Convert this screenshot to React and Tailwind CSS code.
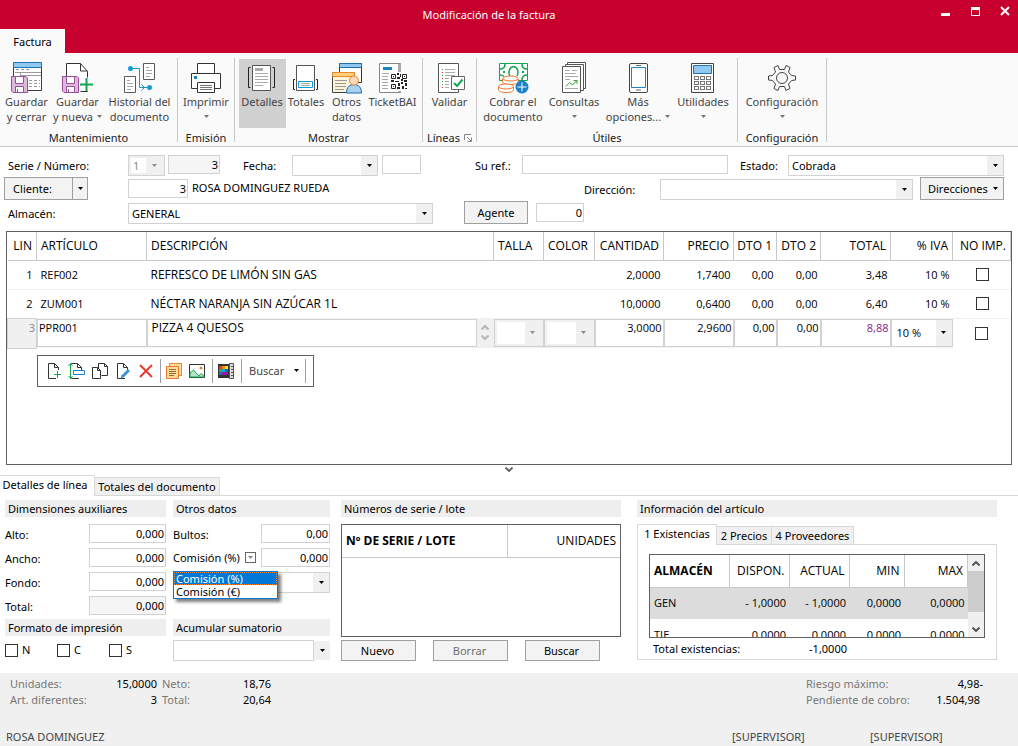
import { useState } from "react";

const lines = [
  { id: 1, code: "REF002", name: "REFRESCO DE LIMÓN SIN GAS", qty: "2,0000", price: "1,7400", d1: "0,00", d2: "0,00", total: "3,48" },
  { id: 2, code: "ZUM001", name: "NÉCTAR NARANJA SIN AZÚCAR 1L", qty: "10,0000", price: "0,6400", d1: "0,00", d2: "0,00", total: "6,40" },
];

const columns = [
  { label: "LIN", width: "w-[29px]", align: "text-right pr-1" },
  { label: "ARTÍCULO", width: "w-[110px]", align: "text-left pl-1" },
  { label: "DESCRIPCIÓN", width: "", align: "text-left pl-1" },
  { label: "TALLA", width: "w-[50px]", align: "text-left pl-1" },
  { label: "COLOR", width: "w-[51px]", align: "text-left pl-1" },
  { label: "CANTIDAD", width: "w-[69px]", align: "text-right pr-1" },
  { label: "PRECIO", width: "w-[70px]", align: "text-right pr-1" },
  { label: "DTO 1", width: "w-[43px]", align: "text-right pr-1" },
  { label: "DTO 2", width: "w-[44px]", align: "text-right pr-1" },
  { label: "TOTAL", width: "w-[70px]", align: "text-right pr-1" },
  { label: "% IVA", width: "w-[62px]", align: "text-right pr-1" },
  { label: "NO IMP.", width: "w-[58px]", align: "text-right pr-1" },
];

const stock = [
  { code: "GEN", values: ["- 1,0000", "- 1,0000", "0,0000", "0,0000"], selected: true },
  { code: "TIE", values: ["0,0000", "0,0000", "0,0000", "0,0000"], selected: false },
];

function Caret({ className = "text-black" }) {
  return (
    <svg className={`w-[5px] h-[3px] shrink-0 ${className}`} viewBox="0 0 5 3" fill="currentColor" aria-hidden="true">
      <path d="M0 0h5L2.500 3z" />
    </svg>
  );
}

function Chevron({ up = false }) {
  return (
    <svg viewBox="0 0 8 5" className="block h-[5px] w-2" fill="none" stroke="currentColor" strokeWidth="2" aria-hidden="true">
      <path d={up ? "M.5 4.500L4 1l3.500 3.500" : "M.5.5L4 4 7.500.5"} />
    </svg>
  );
}

function Field({ id, label, value = "", className = "", disabled = false }) {
  return (
    <input
      id={id}
      aria-label={label}
      defaultValue={value}
      disabled={disabled}
      className={`h-[19px] min-w-0 border border-[#d2d2d2] px-px pb-px text-right leading-4 outline-none ${disabled ? "bg-[#f5f5f5]" : "bg-white"} ${className}`}
    />
  );
}

function Combo({ id, label, value = "", height = "h-[21px]", className = "", disabled = false }) {
  return (
    <div className={`flex min-w-0 border border-[#d2d2d2] leading-4 ${height} ${disabled ? "bg-[#f0f0f0] p-0.5 text-[#8a8a8a]" : "bg-white"} ${className}`}>
      <select
        id={id}
        aria-label={label}
        disabled={disabled}
        className={`min-w-0 flex-1 appearance-none bg-white outline-none ${disabled ? "pl-0.5" : "pl-[3px]"}`}
      >
        <option>{value}</option>
      </select>
      <span className="pointer-events-none flex w-4 items-center justify-center bg-[#f0f0f0]">
        <Caret className={disabled ? "text-[#8a8a8a]" : "text-black"} />
      </span>
    </div>
  );
}

function Check({ label, children }) {
  return (
    <label className="flex items-center gap-1">
      <input
        type="checkbox"
        aria-label={label}
        className="size-[13px] appearance-none border border-[#333] bg-white align-middle checked:bg-[#0078d7]"
      />
      {children}
    </label>
  );
}

function PushButton({ children, disabled = false, className = "" }) {
  return (
    <button
      disabled={disabled}
      className={`border border-[#a0a0a0] bg-[#f3f3f3] text-center disabled:text-[#6d6d6d] ${className}`}
    >
      {children}
    </button>
  );
}

function SectionTitle({ children }) {
  return <h2 className="h-[17px] truncate bg-[#eeeeee] pl-[3px] leading-[17px]">{children}</h2>;
}

/* ---------- ribbon icons ---------- */

function Floppy({ x = 0, y = 0 }) {
  return (
    <g transform={`translate(${x} ${y})`}>
      <path d="M.5.5H15l1.500 1.500V16.500H2L.5 15z" fill="#dcb8dc" stroke="#9b4f9b" />
      <path d="M4.500 1v6.500h8V1" fill="#fff" stroke="#9b4f9b" />
      <path d="M4.500 16v-5.500h8V16" fill="#fff" stroke="#9b4f9b" />
      <path d="M6.500 13v3" stroke="#9b4f9b" />
    </g>
  );
}

function IconSaveClose() {
  return (
    <svg viewBox="0 0 32 32" className="size-8" fill="none" aria-hidden="true">
      <path d="M2.500 5.500h28v23h-28z" fill="#fff" stroke="#3b3b3b" />
      <path d="M2.500.5h28v5h-28z" fill="#92c8f0" stroke="#1a75bb" />
      <path d="M5 7.500h3m2 0h3m2 0h3M4 10.500h26M9.500 11v3M18 18.500h3m2 0h3m2 0h1M18 21.500h3m2 0h3m2 0h1M18 24.500h3m2 0h3m2 0h1M10 13.500h20" stroke="#9a9a9a" />
      <Floppy x={0} y={14} />
    </svg>
  );
}

function IconSaveNew() {
  return (
    <svg viewBox="0 0 32 32" className="size-8" fill="none" aria-hidden="true">
      <path d="M4.500 1.500h14l7 8v20h-21z" fill="#fff" stroke="#333" />
      <path d="M18.500 1.500v7.500h7" stroke="#333" />
      <path d="M17 31V17h15" stroke="#fafafa" strokeWidth="3" />
      <Floppy x={0} y={14} />
      <path d="M24.500 16v13M18 22.500h13" stroke="#fff" strokeWidth="4" />
      <path d="M24.500 16v13M18 22.500h13" stroke="#15a550" strokeWidth="2" />
    </svg>
  );
}

function IconHistory() {
  return (
    <svg viewBox="0 0 32 32" className="size-8" fill="none" aria-hidden="true">
      <path d="M19.500 1.500h11v16h-11zM.5 14.500h11v16H.5z" fill="#fff" stroke="#5a5a5a" />
      <path d="M22 5.500h3M22 8.500h6M22 11.500h6M22 14.500h4M3 18.500h3M3 21.500h6M3 24.500h6M3 27.500h4" stroke="#a5a5a5" />
      <path d="M7 6.500h8.500v19h10M17.500 22.500l3 3-3 3" stroke="#139bd9" />
      <circle cx="6.500" cy="6.500" r="2.500" fill="#139bd9" />
      <circle cx="25.500" cy="25.500" r="2.500" fill="#139bd9" />
    </svg>
  );
}

function IconPrint() {
  return (
    <svg viewBox="0 0 32 32" className="size-8" fill="none" aria-hidden="true">
      <path d="M7.500 11V1.500h17V11M7 26.500H1.500v-15h29v15H25" fill="#fff" stroke="#333" />
      <path d="M7.500 20.500h17v10h-17z" fill="#fff" stroke="#333" />
      <path d="M4 14h3v3H4z" fill="#1a82c8" />
      <path d="M10 23.500h12M10 25.500h12M10 27.500h12" stroke="#777" />
    </svg>
  );
}

function IconDetails() {
  return (
    <svg viewBox="0 0 32 32" className="size-8" fill="none" aria-hidden="true">
      <path d="M6.500 3.500h18v25h-18z" fill="#fff" stroke="#555" />
      <path d="M9 6h8v3H9z" fill="#aaa" />
      <path d="M9 11.500h13M9 14.500h13M9 17.500h13M9 20.500h13M9 23.500h8" stroke="#aaa" />
      <path d="M4.500 5.500h-2v20h2M26.500 5.500h2v20h-2" stroke="#222" />
    </svg>
  );
}

function IconTotals() {
  return (
    <svg viewBox="0 0 32 32" className="size-8" fill="none" aria-hidden="true">
      <path d="M6.500 3.500h18v25h-18z" fill="#fff" stroke="#555" />
      <path d="M8.500 19.500h14v6h-14z" fill="#fff" stroke="#139bd9" />
      <path d="M11 21.500h9M11 23.500h9" stroke="#aaa" />
      <path d="M5 17.500H3.500v10H5M26 17.500h1.500v10H26" stroke="#222" />
    </svg>
  );
}

function IconOther() {
  return (
    <svg viewBox="0 0 32 32" className="size-8" fill="none" aria-hidden="true">
      <path d="M8.500 1.500h22v19h-22z" fill="#fff" stroke="#333" />
      <path d="M8.500 1.500h22v4h-22z" fill="#92c8f0" stroke="#1a6fb0" />
      <path d="M1.500 10.500h22v20h-22z" fill="#fdf3d8" stroke="#444" />
      <path d="M1.500 10.500h22v4h-22z" fill="#ffd27a" stroke="#e8862c" />
      <path d="M4 18.500h12M4 21.500h11M4 24.500h11M4 27.500h9" stroke="#999" />
      <path d="M15.500 31c0-6 3-8.500 7.500-8.500s7.500 2.500 7.500 8.500z" fill="#a9d0ef" stroke="#1a6fb0" />
      <circle cx="23" cy="18.500" r="4.500" fill="#fcd9b8" stroke="#e8862c" />
    </svg>
  );
}

function IconTicket() {
  return (
    <svg viewBox="0 0 32 32" className="size-8" fill="none" aria-hidden="true">
      <path d="M2.500 1.500h21v29h-21z" fill="#fff" stroke="#888" />
      <path d="M21 2h3v28h-3z" fill="#aaa" />
      <path d="M6 5h9v3H6z" fill="#1a82c8" />
      <path d="M5 11.500h12M5 14.500h6M5 17.500h6M5 20.500h6M5 23.500h6M5 26.500h6" stroke="#aaa" />
      <path d="M12 10h19v19H12z" fill="#fff" />
      <path d="M14.500 12.500h4v4h-4zM25.500 12.500h4v4h-4zM14.500 22.500h4v4h-4z" stroke="#222" />
      <path
        d="M16 14h1v1h-1zM27 14h1v1h-1zM16 24h1v1h-1zM20 11h2v2h-2zM23 12h1v3h-1zM20 15h3v2h-3zM14 18h3v2h-3zM18 19h4v1h-4zM21 21h2v3h-2zM24 17h2v2h-2zM27 18h3v2h-3zM24 20h2v2h-2zM28 21h2v3h-2zM25 24h2v3h-2zM20 25h3v2h-3zM28 26h2v1h-2z"
        fill="#222"
      />
    </svg>
  );
}

function IconValidate() {
  return (
    <svg viewBox="0 0 32 32" className="size-8" fill="none" aria-hidden="true">
      <path d="M4.500 1.500h20v29h-20z" fill="#fff" stroke="#555" />
      <path d="M11 7.500h10M11 10.500h10M11 13.500h10M11 16.500h4M11 19.500h4M11 22.500h4M11 25.500h4" stroke="#aaa" />
      <path d="M8 7h1v1H8zM8 13h1v1H8zM8 19h1v1H8zM8 22h1v1H8z" fill="#22a34a" />
      <path d="M8 10h1v1H8zM8 16h1v1H8zM8 25h1v1H8z" fill="#e0302a" />
      <path d="M17.500 14.500h13v13h-13z" fill="#fff" stroke="#666" />
      <path d="M20 21l3 3 5.500-6.500" stroke="#15a550" strokeWidth="2" />
    </svg>
  );
}

function IconCollect() {
  return (
    <svg viewBox="0 0 32 32" className="size-8" fill="none" aria-hidden="true">
      <path d="M2.500 1.500h28v17h-28z" fill="#fff" stroke="#15a550" />
      <path d="M3 7c3 0 5-1 5-5M30 7c-3 0-5-1-5-5M30 13c-3 0-5 1-5 5M3 13c2 0 3 .5 4 1.500" stroke="#15a550" strokeWidth="1.500" />
      <path d="M13 14c-2-3-1-9 3.500-9.500 4.500.5 5.500 6 3.500 9.500" stroke="#15a550" strokeWidth="1.500" />
      <path d="M6 9h2v2H6zM25 9h2v2h-2z" fill="#15a550" />
      <path d="M5.500 16.500v3c0 2 3 3 7.500 3s8-1 8-3v-3" fill="#fff" stroke="#e8762c" />
      <ellipse cx="13.500" cy="16.500" rx="7.500" ry="2.500" fill="#fff" stroke="#e8762c" />
      <path d="M1.500 24.500v3c0 2 3 3 7.500 3s7.500-1 7.500-3v-3" fill="#fff" stroke="#e8762c" />
      <ellipse cx="9" cy="24.500" rx="7.500" ry="2.500" fill="#fff" stroke="#e8762c" />
      <circle cx="25" cy="25" r="6.500" fill="#1a82c8" />
      <path d="M25 20.500v9M20.500 25h9" stroke="#fff" />
    </svg>
  );
}

function IconQueries() {
  return (
    <svg viewBox="0 0 32 32" className="size-8" fill="none" aria-hidden="true">
      <path d="M9.500.5h18v26h-18z" fill="#fff" stroke="#555" />
      <path d="M7.500 2.500h18v26h-18z" fill="#fff" stroke="#555" />
      <path d="M4.500 4.500h18v26h-18z" fill="#fff" stroke="#555" />
      <path d="M7 8.500h5m2 0h5M7 11.500h11M7 14.500h13M7 17.500h5M7 26.500h13" stroke="#aaa" />
      <path d="M8 24.500l3.500-4 3 2.500 4.500-4.500M15.500 18.500H19V22" stroke="#35a635" />
    </svg>
  );
}

function IconPhone() {
  return (
    <svg viewBox="0 0 32 32" className="size-8" fill="none" aria-hidden="true">
      <rect x="7.500" y="1.500" width="18" height="29" rx="1.500" fill="#fff" stroke="#444" />
      <path d="M9.500 5.500h14v20h-14z" fill="#fff" stroke="#1a82c8" />
      <path d="M14 3.500h5M14 28h5" stroke="#666" />
    </svg>
  );
}

function IconCalculator() {
  const keys = [14, 19, 24].flatMap((y) => [5, 11, 17].map((x) => [x, y]));
  return (
    <svg viewBox="0 0 32 32" className="size-8" fill="none" aria-hidden="true">
      <path d="M4.500 1.500h22v29h-22z" fill="#fff" stroke="#444" />
      <path d="M6.500 3.500h18v8h-18z" fill="#92c8f0" stroke="#1a75bb" />
      {keys.map(([x, y]) => (
        <rect key={`${x}-${y}`} x={x + 2.5} y={y + 0.5} width="4" height="3" stroke="#777" />
      ))}
    </svg>
  );
}

function IconGear() {
  return (
    <svg viewBox="0 0 32 32" className="size-8" fill="none" stroke="#444" aria-hidden="true">
      <circle cx="16" cy="16" r="5.500" />
      <path
        strokeLinejoin="round"
        d="M13.500 7.500l-1.500-4-4 2 1.500 4.500-3 3.500-4 .5v4l4 .5 3 3.500-1.500 4.500 4 2 1.500-4h5l1.500 4 4-2-1.500-4.500 3-3.500 4-.5v-4l-4-.5-3-3.500 1.500-4.500-4-2-1.500 4z"
      />
    </svg>
  );
}

/* ---------- ribbon ---------- */

const ribbon = [
  {
    title: "Mantenimiento",
    width: "w-[178px]",
    items: [
      { icon: IconSaveClose, text: ["Guardar", "y cerrar"], width: "w-[52px]" },
      { icon: IconSaveNew, text: ["Guardar", "y nueva"], width: "w-[50px]", caret: "inline" },
      { icon: IconHistory, text: ["Historial del", "documento"], width: "w-[74px]" },
    ],
  },
  {
    title: "Emisión",
    width: "w-[57px]",
    items: [{ icon: IconPrint, text: ["Imprimir"], width: "w-[56px]", caret: "below" }],
  },
  {
    title: "Mostrar",
    width: "w-[188px]",
    items: [
      { icon: IconDetails, text: ["Detalles"], width: "w-[47px]", active: true },
      { icon: IconTotals, text: ["Totales"], width: "w-[41px]" },
      { icon: IconOther, text: ["Otros", "datos"], width: "w-[40px]" },
      { icon: IconTicket, text: ["TicketBAI"], width: "w-[52px]" },
    ],
  },
  {
    title: "Líneas",
    width: "w-[54px]",
    launcher: true,
    items: [{ icon: IconValidate, text: ["Validar"], width: "w-[53px]" }],
  },
  {
    title: "Útiles",
    width: "w-[261px]",
    items: [
      { icon: IconCollect, text: ["Cobrar el", "documento"], width: "w-[64px]" },
      { icon: IconQueries, text: ["Consultas"], width: "w-[58px]", caret: "below" },
      { icon: IconPhone, text: ["Más", "opciones..."], width: "w-[70px]", caret: "inline" },
      { icon: IconCalculator, text: ["Utilidades"], width: "w-[60px]", caret: "below" },
    ],
  },
  {
    title: "Configuración",
    width: "w-[89px]",
    items: [{ icon: IconGear, text: ["Configuración"], width: "w-[88px]", caret: "below" }],
  },
];

function RibbonItem({ item }) {
  const Icon = item.icon;
  return (
    <button
      className={`flex h-[69px] shrink-0 flex-col items-center pt-[3px] leading-[15px] whitespace-nowrap text-[#444] ${item.width} ${item.active ? "bg-[#d0d0d0]" : ""}`}
    >
      <Icon />
      <span>{item.text[0]}</span>
      {item.text[1] && (
        <span className="flex items-center gap-1">
          {item.text[1]}
          {item.caret === "inline" && <Caret className="text-[#777]" />}
        </span>
      )}
      {item.caret === "below" && (
        <span className="flex h-[15px] items-center">
          <Caret className="text-[#777]" />
        </span>
      )}
    </button>
  );
}

function Ribbon() {
  return (
    <div className="flex h-[94px] border-b border-[#c8c8c8] bg-[#fafafa] pt-[5px] pb-1">
      {ribbon.map((group) => (
        <section
          key={group.title}
          className={`flex shrink-0 flex-col justify-between border-r border-[#c8c8c8] pt-px ${group.width}`}
        >
          <div className="flex justify-center">
            {group.items.map((item) => (
              <RibbonItem key={item.text[0]} item={item} />
            ))}
          </div>
          <h2 className="flex h-2 items-center justify-center gap-1 leading-4 text-[#222]">
            {group.title}
            {group.launcher && (
              <button aria-label="Opciones de líneas">
                <svg viewBox="0 0 8 8" className="size-2" fill="none" stroke="#888" aria-hidden="true">
                  <path d="M.5 6V.5H7M3 3l4 4M7.500 3.500v4h-4" />
                </svg>
              </button>
            )}
          </h2>
        </section>
      ))}
    </div>
  );
}

/* ---------- line toolbar ---------- */

function Sheet() {
  return <path d="M10 15.500H2.500V.5h6l4 4V8M8.500.5v4h4" fill="none" stroke="#333" />;
}

function ToolIcon({ label, children }) {
  return (
    <button aria-label={label} className="flex h-6 w-[23px] items-center justify-center">
      <svg viewBox="0 0 16 16" className="size-4 overflow-visible" fill="none" aria-hidden="true">
        {children}
      </svg>
    </button>
  );
}

function LineToolbar() {
  return (
    <div className="mt-[6px] ml-[30px] flex h-8 w-[277px] items-center border border-[#5f5f5f] bg-white pl-1">
      <ToolIcon label="Nueva línea">
        <Sheet />
        <path d="M11.500 7v8M7.500 11.500h8" stroke="#fff" strokeWidth="3" />
        <path d="M11.500 8v7M8 11.500h7" stroke="#15a550" />
      </ToolIcon>
      <ToolIcon label="Insertar línea">
        <Sheet />
        <path d="M2.500 1v14" stroke="#fff" strokeWidth="3" />
        <path d="M4.500 7.500h11v4h-11z" fill="#fff" stroke="#1a82c8" />
        <path d="M1.500 1v14M-.5 3l2-2.500 2 2.500M-.5 13l2 2.500 2-2.500" stroke="#15a550" />
      </ToolIcon>
      <ToolIcon label="Duplicar línea">
        <path d="M6.500 5V.5h6l3 3v9h-6M12.500.5v3h3" stroke="#333" />
        <path d="M.5 4.500h5l3 3v8h-8zM5.500 4.500v3h3" fill="#fff" stroke="#333" />
      </ToolIcon>
      <ToolIcon label="Modificar línea">
        <Sheet />
        <path d="M7 14l7-7" stroke="#3d93d5" strokeWidth="3" />
        <path d="M5.500 15.500l1-2.500 1.500 1.500z" fill="#3d93d5" />
      </ToolIcon>
      <ToolIcon label="Eliminar línea">
        <path d="M2 2l12 12M14 2L2 14" stroke="#ec3b32" strokeWidth="2" />
      </ToolIcon>
      <span className="mr-px ml-[3px] h-6 w-px bg-[#a0a0a0]" />
      <ToolIcon label="Notas">
        <path d="M3.500.5h12v12h-12z" fill="#ffe0a0" stroke="#e8862c" />
        <path d="M.5 3.500h12v12H.5z" fill="#ffdb94" stroke="#e8762c" />
        <path d="M3 6.500h7M3 8.500h7M3 10.500h7M3 12.500h5" stroke="#8a6d3b" />
      </ToolIcon>
      <ToolIcon label="Imagen">
        <path d="M.5 1.500h15v13H.5z" fill="#fff" stroke="#333" />
        <path d="M1 10l3.500-3 5.500 6 2-2.500 3 2.500v1H1z" fill="#b9e3c6" stroke="#15a550" />
        <circle cx="12" cy="5" r="1.500" fill="#ee7b30" />
      </ToolIcon>
      <span className="mr-px ml-1 h-6 w-px bg-[#a0a0a0]" />
      <ToolIcon label="Tallas y colores">
        <path d="M0 1h12v14H0z" fill="#333" />
        <path d="M1 3h3v3H1z" fill="#e33" />
        <path d="M4 3h3v3H4z" fill="#f80" />
        <path d="M7 3h3v3H7z" fill="#fe0" />
        <path d="M1 6h3v3H1z" fill="#3a3" />
        <path d="M4 6h3v3H4z" fill="#0ad" />
        <path d="M7 6h3v3H7z" fill="#06c" />
        <path d="M1 9h3v3H1z" fill="#26c" />
        <path d="M4 9h3v3H4z" fill="#82a" />
        <path d="M7 9h3v3H7z" fill="#a1a" />
        <path d="M11.500.5h4v15h-4z" fill="#ddd" stroke="#555" />
        <path d="M13 3.500h2M13 6.500h2M13 9.500h2M13 12.500h2" stroke="#555" />
      </ToolIcon>
      <span className="ml-1 h-6 w-px bg-[#a0a0a0]" />
      <button className="flex h-6 w-[63px] items-center justify-between pr-[6px] pl-[7px] text-[#444]">
        Buscar
        <Caret />
      </button>
      <span className="h-6 w-px bg-[#a0a0a0]" />
    </div>
  );
}

function EditCell({ label, value, className = "" }) {
  return (
    <td className="p-0 align-top">
      <input
        aria-label={label}
        defaultValue={value}
        className={`block h-7 w-full border border-[#d2d2d2] bg-white px-px pb-2.5 outline-none ${className}`}
      />
    </td>
  );
}

function LinesGrid() {
  return (
    <div className="mx-[6px] mt-[6px] min-h-[234px] flex-1 border border-[#5f5f5f]">
      <table className="w-full table-fixed border-collapse font-['Open_Sans',sans-serif] text-[12px]">
        <thead>
          <tr className="h-7">
            {columns.map((col) => (
              <th
                key={col.label}
                className={`border-r border-b border-[#c8c8c8] p-0 font-normal whitespace-nowrap ${col.width} ${col.align}`}
              >
                {col.label}
              </th>
            ))}
          </tr>
        </thead>
        <tbody>
          {lines.map((line) => (
            <tr key={line.id} className="h-[29px] border-b border-[#f0f0f0] text-right text-[11px]">
              <td className="pr-1">{line.id}</td>
              <td className="pl-1 text-left">{line.code}</td>
              <td className="pl-1 text-left text-[12px]">{line.name}</td>
              <td />
              <td />
              <td className="pr-[3px]">{line.qty}</td>
              <td className="pr-[3px]">{line.price}</td>
              <td className="pr-[3px]">{line.d1}</td>
              <td className="pr-[3px]">{line.d2}</td>
              <td className="pr-[3px]">{line.total}</td>
              <td className="pr-[3px]">10 %</td>
              <td className="pl-[23px]">
                <Check label={`No imprimir línea ${line.id}`} />
              </td>
            </tr>
          ))}
          <tr className="h-[30px] bg-[#f0f0f0] text-right text-[11px]">
            <td className="border border-[#d2d2d2] pr-px pb-2.5 text-[#8a8a8a]">3</td>
            <EditCell label="Artículo" value="PPR001" />
            <td className="p-0 align-top">
              <div className="flex">
                <input
                  aria-label="Descripción"
                  defaultValue="PIZZA 4 QUESOS"
                  className="h-7 min-w-0 flex-1 border border-[#d2d2d2] bg-white px-1 pb-2.5 text-[12px] outline-none"
                />
                <span className="flex w-[17px] flex-col items-center justify-around py-1 text-[#b5b5b5]">
                  <button aria-label="Subir">
                    <Chevron up />
                  </button>
                  <button aria-label="Bajar">
                    <Chevron />
                  </button>
                </span>
              </div>
            </td>
            <td className="p-0 align-top">
              <Combo label="Talla" disabled height="h-7" />
            </td>
            <td className="p-0 align-top">
              <Combo label="Color" disabled height="h-7" />
            </td>
            <EditCell label="Cantidad" value="3,0000" className="text-right" />
            <EditCell label="Precio" value="2,9600" className="text-right" />
            <EditCell label="Descuento 1" value="0,00" className="text-right" />
            <EditCell label="Descuento 2" value="0,00" className="text-right" />
            <EditCell label="Total" value="8,88" className="text-right text-[#8b1a8b]" />
            <td className="p-0 align-top">
              <Combo label="% IVA" value="10 %" height="h-7" className="pl-0.5" />
            </td>
            <td className="bg-white pl-[22px]">
              <Check label="No imprimir línea 3" />
            </td>
          </tr>
        </tbody>
      </table>
      <LineToolbar />
    </div>
  );
}

function DocumentForm() {
  return (
    <form className="pt-[6px] leading-[22px]" onSubmit={(e) => e.preventDefault()}>
      <div className="flex h-6 items-start pt-0.5 pr-[14px] pl-2">
        <label htmlFor="serie" className="w-[120px]">Serie / Número:</label>
        <Combo id="serie" value="1" disabled className="w-[37px]" />
        <Field label="Número" value="3" disabled className="ml-[3px] w-[52px]" />
        <label htmlFor="fecha" className="ml-[23px] w-[49px]">Fecha:</label>
        <Combo id="fecha" className="w-[86px]" />
        <Field label="Hora" className="ml-1 w-[39px]" />
        <label htmlFor="ref" className="ml-[54px] w-[47px]">Su ref.:</label>
        <input id="ref" className="h-[19px] min-w-0 flex-1 border border-[#d2d2d2] px-1 outline-none" />
        <label htmlFor="estado" className="ml-3 w-[48px]">Estado:</label>
        <Combo id="estado" value="Cobrada" className="w-[216px]" />
      </div>

      <div className="flex h-6 items-start pt-0.5 pr-[14px] pl-1">
        <PushButton className="-mt-0.5 h-[23px] w-[69px] pr-3">Cliente:</PushButton>
        <button
          aria-label="Opciones de cliente"
          className="-mt-0.5 flex h-[23px] w-[15px] items-center justify-center border border-l-0 border-[#a0a0a0] bg-[#f3f3f3]"
        >
          <Caret />
        </button>
        <Field label="Cliente" value="3" className="ml-10 w-[60px]" />
        <span className="ml-1 w-[392px] leading-[18px]">ROSA DOMINGUEZ RUEDA</span>
        <label htmlFor="direccion" className="w-[76px]">Dirección:</label>
        <Combo id="direccion" className="flex-1" />
        <PushButton className="-mt-0.5 ml-[7px] flex h-[23px] w-[84px] items-center justify-between pr-[5px] pl-[7px]">
          Direcciones
          <Caret />
        </PushButton>
      </div>

      <div className="flex h-6 items-start pt-0.5 pl-2">
        <label htmlFor="almacen" className="w-[120px]">Almacén:</label>
        <Combo id="almacen" value="GENERAL" className="w-[305px]" />
        <PushButton className="-mt-0.5 ml-[31px] h-[23px] w-[64px]">Agente</PushButton>
        <Field label="Agente" value="0" className="ml-2 w-[48px]" />
      </div>
    </form>
  );
}

function Dimensions() {
  return (
    <div className="w-[161px]">
      <SectionTitle>Dimensiones auxiliares</SectionTitle>
      <div className="mt-[7px] h-[95px] leading-[22px]">
        {["Alto", "Ancho", "Fondo", "Total"].map((name) => (
          <div key={name} className="flex h-6 items-start justify-between">
            <label htmlFor={`dim-${name}`}>{name}:</label>
            <Field id={`dim-${name}`} value="0,000" disabled={name === "Total"} className="w-[77px]" />
          </div>
        ))}
      </div>
      <SectionTitle>Formato de impresión</SectionTitle>
      <div className="mt-[6px] flex">
        {["N", "C", "S"].map((name) => (
          <div key={name} className="w-[52px]">
            <Check label={name}>{name}</Check>
          </div>
        ))}
      </div>
    </div>
  );
}

function OtherData() {
  const [open, setOpen] = useState(true);
  const [commission, setCommission] = useState("Comisión (%)");

  return (
    <div className="w-[157px]">
      <SectionTitle>Otros datos</SectionTitle>
      <div className="mt-[7px] h-[95px]">
        <div className="flex h-6 items-start justify-between leading-[22px]">
          <label htmlFor="bultos">Bultos:</label>
          <Field id="bultos" value="0,00" className="w-[69px]" />
        </div>
        <div className="relative flex h-6 items-start justify-between leading-[19px]">
          <span className="whitespace-nowrap">{commission}</span>
          <span className="flex items-center gap-[5px]">
            <button
              aria-label="Tipo de comisión"
              onClick={() => setOpen(!open)}
              className="flex h-[11px] w-[11px] items-center justify-center border border-[#666]"
            >
              <Caret className="text-[#888]" />
            </button>
            <Field label="Comisión" value="0,000" className="w-[69px]" />
          </span>
          {open && (
            <ul className="absolute top-[23px] left-0 z-10 w-[105px] border border-[#0078d7] bg-white shadow-[3px_3px_3px_rgba(0,0,0,0.5)]">
              {["Comisión (%)", "Comisión (€)"].map((option) => (
                <li key={option}>
                  <button
                    onClick={() => {
                      setCommission(option);
                      setOpen(false);
                    }}
                    className={`block h-[13px] w-full pl-0.5 text-left leading-[13px] ${option === commission ? "bg-[#0078d7] text-white outline-1 -outline-offset-1 outline-[#ff8728] outline-dotted" : ""}`}
                  >
                    {option}
                  </button>
                </li>
              ))}
            </ul>
          )}
        </div>
        <div className="flex h-6 items-start">
          <Combo label="Tipo" className="ml-[60px] flex-1" />
        </div>
      </div>
      <SectionTitle>Acumular sumatorio</SectionTitle>
      <div className="mt-1 flex items-center">
        <select aria-label="Acumular sumatorio" className="h-[21px] flex-1 appearance-none border border-[#d2d2d2] bg-white outline-none" />
        <span className="pointer-events-none flex h-[19px] w-4 items-center justify-center bg-[#f0f0f0]">
          <Caret />
        </span>
      </div>
    </div>
  );
}

function SerialNumbers() {
  return (
    <div className="w-[280px]">
      <SectionTitle>Números de serie / lote</SectionTitle>
      <div className="mt-[7px] h-[113px] border border-[#5f5f5f]">
        <table className="w-full table-fixed border-collapse font-['Open_Sans',sans-serif] text-[12px]">
          <thead>
            <tr className="h-8 border-b border-[#c8c8c8]">
              <th className="w-[165px] border-r border-[#c8c8c8] pl-1 text-left font-bold">Nº DE SERIE / LOTE</th>
              <th className="pr-1 text-right font-normal">UNIDADES</th>
            </tr>
          </thead>
        </table>
      </div>
      <div className="mt-[3px] flex gap-[17px]">
        <PushButton className="h-[21px] w-[75px] pr-0.5">Nuevo</PushButton>
        <PushButton disabled className="h-[21px] w-[75px] pr-0.5">Borrar</PushButton>
        <PushButton className="h-[21px] w-[75px] pr-0.5">Buscar</PushButton>
      </div>
    </div>
  );
}

function ItemInfo() {
  return (
    <div className="w-[360px]">
      <SectionTitle>Información del artículo</SectionTitle>
      <div role="tablist" className="relative z-10 mt-[7px] -mb-px flex items-end">
        <button role="tab" aria-selected="true" className="h-[21px] w-20 border border-b-0 border-[#d8d8d8] bg-white pb-0.5">
          1 Existencias
        </button>
        <button role="tab" className="h-[19px] w-[55px] border border-l-0 border-[#d8d8d8] bg-[#f0f0f0]">2 Precios</button>
        <button role="tab" className="h-[19px] w-[82px] border border-l-0 border-[#d8d8d8] bg-[#f0f0f0]">4 Proveedores</button>
      </div>
      <div className="h-[116px] border border-[#d8d8d8] px-[11px] pt-[9px]">
        <div className="flex h-[84px] overflow-hidden border border-[#5f5f5f]">
          <table className="w-full table-fixed self-start border-collapse font-['Open_Sans',sans-serif] text-[12px]">
            <thead>
              <tr className="h-8 border-b border-[#c8c8c8] text-right">
                <th className="w-[79px] border-r border-[#c8c8c8] pl-1 text-left font-bold">ALMACÉN</th>
                <th className="w-[60px] border-r border-[#c8c8c8] pr-1 font-normal">DISPON.</th>
                <th className="w-[60px] border-r border-[#c8c8c8] pr-1 font-normal">ACTUAL</th>
                <th className="w-[55px] border-r border-[#c8c8c8] pr-1 font-normal">MIN</th>
                <th className="border-r border-[#c8c8c8] pr-1 font-normal">MAX</th>
              </tr>
            </thead>
            <tbody>
              {stock.map((row) => (
                <tr key={row.code} className={`h-8 text-right text-[11px] ${row.selected ? "bg-[#dcdcdc]" : ""}`}>
                  <td className="pl-1 text-left">{row.code}</td>
                  {row.values.map((value, i) => (
                    <td key={i} className="pr-[3px] whitespace-nowrap">{value}</td>
                  ))}
                </tr>
              ))}
            </tbody>
          </table>
          <div className="flex w-4 shrink-0 flex-col items-center bg-[#f0f0f0] text-[#555]">
            <button aria-label="Subir" className="flex h-4 items-center">
              <Chevron up />
            </button>
            <span className="h-[41px] w-full bg-[#cdcdcd]" />
            <button aria-label="Bajar" className="mt-auto flex h-4 items-center">
              <Chevron />
            </button>
          </div>
        </div>
        <p className="flex pl-1 leading-[22px]">
          <span className="w-[132px]">Total existencias:</span>
          <span className="w-[62px] text-right">-1,0000</span>
        </p>
      </div>
    </div>
  );
}

function Summary() {
  return (
    <footer className="flex h-[73px] flex-col justify-between bg-[#f0f0f0] pt-[3px] pb-px text-[#777]">
      <div className="flex justify-between pr-[35px] pl-[10px] leading-4">
        <dl className="grid grid-cols-[85px_62px_44px_70px]">
          <dt>Unidades:</dt>
          <dd className="text-right text-black">15,0000</dd>
          <dt className="pl-[5px]">Neto:</dt>
          <dd className="text-right text-black">18,76</dd>
          <dt className="whitespace-nowrap">Art. diferentes:</dt>
          <dd className="text-right text-black">3</dd>
          <dt className="pl-[5px]">Total:</dt>
          <dd className="text-right text-black">20,64</dd>
        </dl>
        <dl className="grid grid-cols-[115px_62px]">
          <dt>Riesgo máximo:</dt>
          <dd className="text-right text-black">4,98-</dd>
          <dt>Pendiente de cobro:</dt>
          <dd className="pr-[3px] text-right text-black">1.504,98</dd>
        </dl>
      </div>
      <div className="flex pl-[6px] leading-4 text-[#444]">
        <span className="flex-1">ROSA DOMINGUEZ</span>
        <span className="w-[138px]">[SUPERVISOR]</span>
        <span className="w-[148px]">[SUPERVISOR]</span>
      </div>
    </footer>
  );
}

function App() {
  return (
    <div className="flex min-h-screen flex-col bg-white font-['Noto_Sans',sans-serif] text-[11px] leading-4 text-black">
      <header className="bg-[#c8002d]">
        <div className="grid h-[29px] grid-cols-[1fr_auto_1fr] items-center text-white">
          <h1 className="col-start-2 pr-10">Modificación de la factura</h1>
          <div className="flex items-center justify-end gap-5 pr-2 pb-[7px]">
            <button aria-label="Minimizar">
              <svg viewBox="0 0 10 10" className="block size-[10px]" aria-hidden="true">
                <path d="M1 7h9v3H1z" fill="#fff" />
              </svg>
            </button>
            <button aria-label="Maximizar">
              <svg viewBox="0 0 10 10" className="block size-[10px]" aria-hidden="true">
                <path d="M1 1h9v9H1zM2 4v5h7V4z" fill="#fff" fillRule="evenodd" />
              </svg>
            </button>
            <button aria-label="Cerrar">
              <svg viewBox="0 0 10 10" className="block size-[10px]" fill="none" stroke="#fff" strokeWidth="2" aria-hidden="true">
                <path d="M1 1l8 8M9 1L1 9" />
              </svg>
            </button>
          </div>
        </div>
        <button className="block h-6 w-[65px] bg-[#fafafa] pt-0.5">Factura</button>
      </header>
      <Ribbon />
      <DocumentForm />
      <LinesGrid />

      <div className="flex h-[9px] items-center justify-center text-[#666]">
        <button aria-label="Contraer detalles">
          <Chevron />
        </button>
      </div>

      <div role="tablist" className="flex h-[22px] items-end border-b border-[#d8d8d8]">
        <button
          role="tab"
          aria-selected="true"
          className="-mb-px h-[21px] w-[95px] border border-b-0 border-l-0 border-[#d8d8d8] bg-white pr-1 pb-0.5 whitespace-nowrap"
        >
          Detalles de línea
        </button>
        <button role="tab" className="h-[18px] w-[125px] border border-b-0 border-l-0 border-[#d8d8d8] bg-[#f0f0f0] whitespace-nowrap">
          Totales del documento
        </button>
      </div>

      <div className="flex pt-1 pb-[12px] pl-[5px]">
        <Dimensions />
        <div className="ml-[7px]">
          <OtherData />
        </div>
        <div className="ml-[11px]">
          <SerialNumbers />
        </div>
        <div className="ml-4">
          <ItemInfo />
        </div>
      </div>
      <Summary />
    </div>
  );
}

export default App;
